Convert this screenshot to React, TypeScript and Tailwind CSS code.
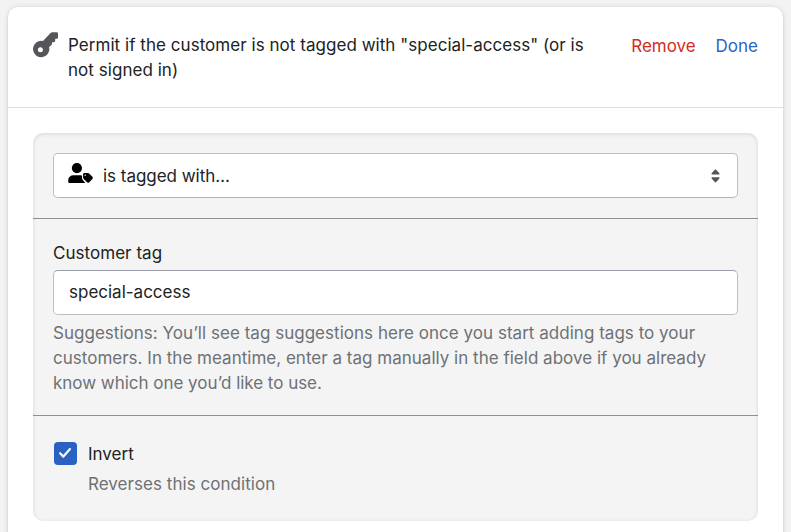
function KeyIcon() {
  return (
    <svg width="26" height="26" viewBox="0 0 26 26" fill="#54565a">
      <path
        fillRule="evenodd"
        d="M17.8 0.8Q18.4 0.2 19.3 0.2H23.6Q25 0.2 25 1.6V5.4Q25 6.8 23.6 6.8H22.2V8.8Q22.2 10.2 20.8 10.2H19V11.8Q19 12.4 18.5 12.9L16.1 14.9A8.2 8.2 0 1 1 10 9ZM7.4 15.2a2.5 2.5 0 1 0 0 5a2.5 2.5 0 1 0 0-5Z"
      />
    </svg>
  );
}

function UserTagIcon() {
  return (
    <svg width="26" height="22" viewBox="0 0 26 22" fill="#000">
      <circle cx="8.9" cy="5.1" r="5.1" />
      <path d="M6 12.2H12.2Q13.2 12.2 14 12.5V14.8Q14 16 14.8 16.9L17.4 20H1.4Q0.2 20 0.2 18.8V17.7Q0.2 12.2 6 12.2Z" />
      <path
        fillRule="evenodd"
        d="M15.1 11.2Q15.1 10 16.3 10H19.8Q20.5 10 21.1 10.6L24.4 13.8Q25.4 14.9 24.4 16L21.3 19.2Q20.2 20.3 19.1 19.2L15.7 16Q15.1 15.3 15.1 14.7ZM17.2 11.5a.7.7 0 1 0 0 1.4a.7.7 0 1 0 0-1.4Z"
      />
    </svg>
  );
}

export default function App() {
  return (
    <div className="h-[532px] w-[791px] overflow-hidden bg-[#f3f3f3] px-2 pt-[7px] font-['Inter',sans-serif] text-[17px] leading-[25px] text-[#202223]">
      <section className="h-[600px] rounded-[10px] bg-white shadow-[0_0_6px_rgba(23,24,24,0.09),0_1px_3px_rgba(0,0,0,0.13)]">
        <header className="flex h-[101px] border-b border-[#dcdee0] pt-[25px] pr-[25px] pl-[25px]">
          <div className="w-[35px] shrink-0"><KeyIcon /></div>
          <p className="pt-px whitespace-nowrap">
            <span className="block tracking-[0.042px]">Permit if the customer is not tagged with "special-access" (or is</span>
            <span className="block tracking-[0.042px]">not signed in)</span>
          </p>
          <div className="ml-auto flex gap-5 pt-0.5">
            <button className="h-[25px] tracking-[-0.04px] text-[#d22d1e]">Remove</button>
            <button className="h-[25px] text-[#2c63c3]">Done</button>
          </div>
        </header>

        <div className="px-[25px] pt-[25px]">
          <div className="h-[388px] rounded-[10px] bg-[#f4f4f4] shadow-[inset_0_1px_4px_rgba(0,0,0,0.12)]">
            <div className="h-[86px] border-b border-[#8c9196] px-5 pt-5">
              <div className="flex h-[45px] items-center rounded-[5px] border border-[#babfc3] border-b-[#aeb4b9] bg-white pr-[17px] pl-[14px]">
                <div className="pb-[3px]"><UserTagIcon /></div>
                <span className="ml-[9px] pt-0.5 tracking-[-0.03px]">is tagged with…</span>
                <svg className="ml-auto" width="9" height="14" viewBox="0 0 9 14" fill="#54565a">
                  <path d="M4.5 .4Q4.9 .4 5.2 .8L8.4 4.3Q8.9 5.6 7.9 5.6H1.1Q.1 5.6 .6 4.3L3.8 .8Q4.1 .4 4.5 .4ZM4.5 13.4Q4.9 13.4 5.2 13L8.4 9.5Q8.9 8.2 7.9 8.2H1.1Q.1 8.2 .6 9.5L3.8 13Q4.1 13.4 4.5 13.4Z" />
                </svg>
              </div>
            </div>

            <div className="h-[197px] border-b border-[#8c9196] px-5 pt-[22px]">
              <label className="block tracking-[0.04px]">Customer tag</label>
              <div className="mt-[4px] flex h-[45px] items-center rounded-[5px] border border-[#babfc3] border-t-[#999eaa] bg-white px-[15px]">special-access</div>
              <p className="mt-[6px] whitespace-nowrap text-[#6d7175]">
                <span className="block tracking-[0.026px]">Suggestions: You’ll see tag suggestions here once you start adding tags to your</span>
                <span className="block tracking-[0.012px]">customers. In the meantime, enter a tag manually in the field above if you already</span>
                <span className="block tracking-[-0.03px]">know which one you’d like to use.</span>
              </p>
            </div>

            <div className="flex pt-[26px] pl-[21px]">
              <div className="flex h-[23px] w-[23px] items-center justify-center rounded-[4px] bg-[#2962c2] pr-px pb-px">
                <svg width="14" height="12" viewBox="0 0 14 12" fill="none" stroke="#f3f6fb" strokeWidth="2.3" strokeLinecap="round" strokeLinejoin="round">
                  <path d="M2.1 6.3L5.4 9.6L12 2.1" />
                </svg>
              </div>
              <div className="ml-[11px]">
                <p>Invert</p>
                <p className="mt-[5px] tracking-[0.04px] text-[#6d7175]">Reverses this condition</p>
              </div>
            </div>
          </div>
        </div>
      </section>
    </div>
  );
}
